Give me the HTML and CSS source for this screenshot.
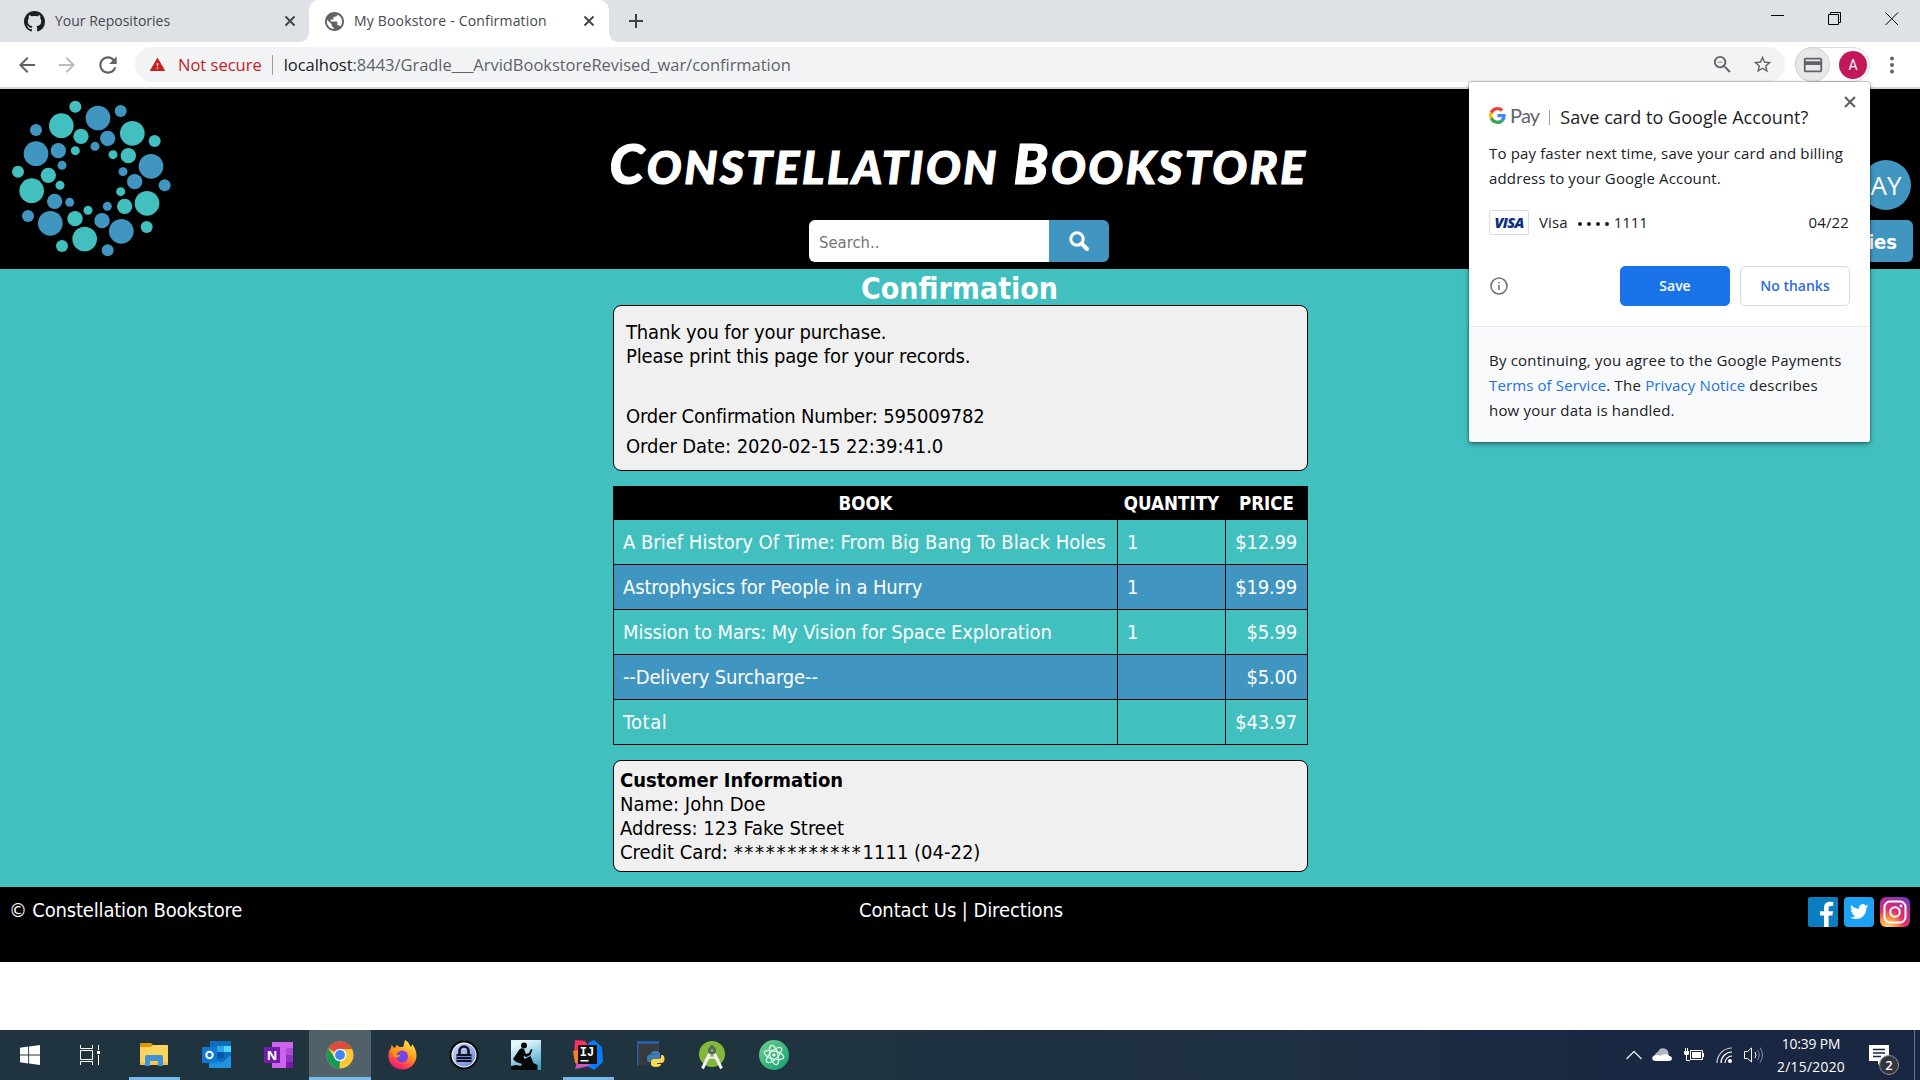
FILE: index.html
```html
<!DOCTYPE html>
<html lang="en">
<head>
<meta charset="utf-8">
<title>My Bookstore - Confirmation</title>
<link rel="stylesheet" href="styles.css">
</head>
<body>
<div class="tabstrip">
  <div class="tab tab-idle">
    <svg class="favicon" width="21" height="21" viewBox="0 0 16 16"><path fill="#1b1f23" fill-rule="evenodd" d="M8 0C3.58 0 0 3.58 0 8c0 3.54 2.29 6.53 5.47 7.59.4.07.55-.17.55-.38 0-.19-.01-.82-.01-1.49-2.01.37-2.53-.49-2.69-.94-.09-.23-.48-.94-.82-1.13-.28-.15-.68-.52-.01-.53.63-.01 1.08.58 1.23.82.72 1.21 1.87.87 2.33.66.07-.52.28-.87.51-1.07-1.78-.2-3.64-.89-3.64-3.95 0-.87.31-1.59.82-2.15-.08-.2-.36-1.02.08-2.12 0 0 .67-.21 2.2.82.64-.18 1.32-.27 2-.27s1.36.09 2 .27c1.53-1.04 2.2-.82 2.2-.82.44 1.1.16 1.92.08 2.12.51.56.82 1.27.82 2.15 0 3.07-1.87 3.75-3.65 3.95.29.25.54.73.54 1.48 0 1.07-.01 1.93-.01 2.2 0 .21.15.46.55.38A8.01 8.01 0 0016 8c0-4.42-3.58-8-8-8z"/></svg>
    <span class="tab-title">Your Repositories</span>
    <svg class="tab-close" width="12" height="12" viewBox="0 0 12 12"><path d="M1.5 1.5l9 9M10.500 1.500l-9 9"/></svg>
  </div>
  <div class="tab tab-active">
    <svg class="favicon" width="19" height="19" viewBox="2 2 20 20"><path fill="#5f6368" d="M12 2C6.480 2 2 6.480 2 12s4.480 10 10 10 10-4.480 10-10S17.520 2 12 2zm-1 17.930c-3.950-.490-7-3.850-7-7.930 0-.620.080-1.210.210-1.790L9 15v1c0 1.100.900 2 2 2v1.930zm6.900-2.540c-.260-.810-1-1.390-1.900-1.390h-1v-3c0-.550-.450-1-1-1H8v-2h2c.550 0 1-.450 1-1V7h2c1.100 0 2-.900 2-2v-.410c2.930 1.190 5 4.060 5 7.410 0 2.080-.800 3.970-2.100 5.390z"/></svg>
    <span class="tab-title wide">My Bookstore - Confirmation</span>
    <svg class="tab-close" width="12" height="12" viewBox="0 0 12 12"><path d="M1.500 1.500l9 9M10.500 1.500l-9 9"/></svg>
  </div>
  <svg class="new-tab" width="16" height="16" viewBox="0 0 16 16"><path d="M8 1v14M1 8h14"/></svg>
  <div class="window-buttons">
    <svg width="14" height="14" viewBox="0 0 14 14"><path d="M0 3.500h13"/></svg>
    <svg width="14" height="14" viewBox="0 0 14 14"><path d="M.5 2.500h10v10H.5zM2.500 2.500v-2h10v10h-2"/></svg>
    <svg width="14" height="14" viewBox="0 0 14 14"><path d="M.5.500l12.500 12.500M13 .500L.500 13"/></svg>
  </div>
</div>

<div class="toolbar">
  <div class="nav">
    <svg width="24" height="24" viewBox="0 0 24 24"><path fill="#5f6368" d="M20 11H7.830l5.590-5.590L12 4l-8 8 8 8 1.410-1.410L7.830 13H20v-2z"/></svg>
    <svg width="24" height="24" viewBox="0 0 24 24"><path fill="#babcbe" d="M4 13h12.170l-5.590 5.590L12 20l8-8-8-8-1.410 1.410L16.170 11H4v2z"/></svg>
    <svg width="26" height="26" viewBox="0 0 24 24"><path fill="#5f6368" d="M17.650 6.350C16.200 4.900 14.210 4 12 4c-4.420 0-7.990 3.580-7.990 8s3.570 8 7.990 8c3.730 0 6.840-2.550 7.730-6h-2.080c-.820 2.330-3.040 4-5.650 4-3.310 0-6-2.690-6-6s2.690-6 6-6c1.660 0 3.140.690 4.220 1.780L13 11h7V4l-2.350 2.350z"/></svg>
  </div>
  <div class="omnibox">
    <svg width="17" height="17" viewBox="0 1 24 22"><path fill="#c5221f" d="M1 21h22L12 2 1 21zm12-3h-2v-2h2v2zm0-4h-2v-4h2v4z"/></svg>
    <span class="insecure">Not secure</span>
    <span class="divider"></span>
    <span class="url"><b>localhost</b>:8443/Gradle___ArvidBookstoreRevised_war/confirmation</span>
    <svg class="zoom-icon" width="23" height="23" viewBox="0 0 24 24"><path fill="#5f6368" d="M15.500 14h-.790l-.280-.270A6.471 6.471 0 0016 9.500 6.500 6.500 0 109.500 16c1.610 0 3.090-.590 4.230-1.570l.270.280v.790l5 4.990L20.490 19l-4.990-5zm-6 0C7.010 14 5 11.990 5 9.500S7.010 5 9.500 5 14 7.010 14 9.500 11.990 14 9.500 14zM7 9h5v1H7z"/></svg>
    <svg width="21" height="21" viewBox="0 0 24 24"><path fill="#5f6368" d="M22 9.240l-7.190-.620L12 2 9.190 8.630 2 9.240l5.460 4.730L5.820 21 12 17.270 18.180 21l-1.630-7.030L22 9.240zM12 15.400l-3.760 2.270 1-4.280-3.320-2.880 4.380-.380L12 6.100l1.710 4.040 4.380.380-3.320 2.880 1 4.280L12 15.400z"/></svg>
  </div>
  <div class="profile">
    <span class="card-button"><svg width="22" height="22" viewBox="0 0 24 24"><path fill="#5f6368" d="M20 4H4c-1.110 0-1.990.890-1.990 2L2 18c0 1.110.890 2 2 2h16c1.110 0 2-.890 2-2V6c0-1.110-.890-2-2-2zm0 14H4v-6h16v6zm0-10H4V6h16v2z"/></svg></span>
    <span class="avatar">A</span>
  </div>
  <svg class="menu-dots" width="6" height="18" viewBox="0 0 6 18"><g fill="#5f6368"><circle cx="3" cy="2.500" r="2"/><circle cx="3" cy="9" r="2"/><circle cx="3" cy="15.500" r="2"/></g></svg>
</div>

<header class="site-header">
  <svg class="logo" width="200" height="181" viewBox="0 3 600 543">
    <g fill="#4096c0">
      <circle cx="294" cy="90" r="37"/><circle cx="453" cy="235" r="37"/><circle cx="364" cy="430" r="37"/><circle cx="151" cy="406" r="37"/><circle cx="108" cy="197" r="37"/>
      <circle cx="323" cy="151" r="23"/><circle cx="404" cy="281" r="23"/><circle cx="306" cy="398" r="23"/><circle cx="164" cy="340" r="23"/><circle cx="175" cy="188" r="23"/>
      <circle cx="362" cy="69" r="18"/><circle cx="494" cy="292" r="18"/><circle cx="323" cy="487" r="18"/><circle cx="84" cy="384" r="18"/><circle cx="108" cy="126" r="18"/>
      <circle cx="285" cy="175" r="13.500"/><circle cx="369" cy="251" r="13.500"/><circle cx="322" cy="355" r="13.500"/><circle cx="209" cy="343" r="13.500"/><circle cx="186" cy="232" r="13.500"/>
    </g>
    <g fill="#42bfbf">
      <circle cx="184" cy="113" r="37"/><circle cx="397" cy="136" r="37"/><circle cx="441" cy="346" r="37"/><circle cx="254" cy="453" r="37"/><circle cx="95" cy="308" r="37"/>
      <circle cx="243" cy="145" r="23"/><circle cx="385" cy="203" r="23"/><circle cx="374" cy="355" r="23"/><circle cx="225" cy="392" r="23"/><circle cx="145" cy="262" r="23"/>
      <circle cx="226" cy="56" r="18"/><circle cx="464" cy="159" r="18"/><circle cx="440" cy="417" r="18"/><circle cx="186" cy="474" r="18"/><circle cx="54" cy="251" r="18"/>
      <circle cx="226" cy="188" r="13.500"/><circle cx="339" cy="200" r="13.500"/><circle cx="362" cy="311" r="13.500"/><circle cx="264" cy="367" r="13.500"/><circle cx="180" cy="292" r="13.500"/>
    </g>
  </svg>
  <div class="brand">
    <h1 class="site-title">C<span>onstellation</span> B<span>ookstore</span></h1>
    <form class="search">
      <span class="search-field">Search..</span>
      <span class="search-button"><svg width="20" height="20" viewBox="0 0 20 20"><circle cx="8" cy="8" r="6.200" fill="none" stroke="#fff" stroke-width="3"/><path d="M12.500 12.500l5.500 5.500" stroke="#fff" stroke-width="4" stroke-linecap="round"/></svg></span>
    </form>
  </div>
  <div class="account">
    <span class="initials">AY</span>
    <span class="categories">Categories</span>
  </div>
</header>

<main class="content">
  <h2 class="page-title">Confirmation</h2>
  <section class="panel receipt">
    <p>Thank you for your purchase.<br>Please print this page for your records.</p>
    <p class="order">Order Confirmation Number: 595009782</p>
    <p class="order date">Order Date: 2020-02-15 22:39:41.0</p>
  </section>
  <table class="items">
    <colgroup><col class="col-book"><col class="col-qty"><col class="col-price"></colgroup>
    <thead><tr><th>BOOK</th><th>QUANTITY</th><th>PRICE</th></tr></thead>
    <tbody>
      <tr><td>A Brief History Of Time: From Big Bang To Black Holes</td><td>1</td><td>$12.99</td></tr>
      <tr><td class="snug">Astrophysics for People in a Hurry</td><td>1</td><td>$19.99</td></tr>
      <tr><td class="snug">Mission to Mars: My Vision for Space Exploration</td><td>1</td><td>$5.99</td></tr>
      <tr><td class="snug">--Delivery Surcharge--</td><td></td><td>$5.00</td></tr>
      <tr><td class="loose">Total</td><td></td><td>$43.97</td></tr>
    </tbody>
  </table>
  <section class="panel customer">
    <h3>Customer Information</h3>
    <p>Name: John Doe</p>
    <p>Address: 123 Fake Street</p>
    <p>Credit Card: <span class="mask">************</span>1111 (04-22)</p>
  </section>
</main>

<footer class="site-footer">
  <span class="copyright">© Constellation Bookstore</span>
  <span class="links">Contact Us | Directions</span>
  <span class="social">
    <svg width="30" height="30" viewBox="0 0 30 30"><rect width="30" height="30" rx="2" fill="#0d7dc2"/><path fill="#fff" d="M16 30V18.500h-4v-4.300h4V11c0-4 2.300-6.200 6-6.200l3.200.2v4h-2.300c-1.800 0-2.300.9-2.300 2.300v2.900h4.400l-.6 4.300h-3.800V30z"/></svg>
    <svg width="30" height="30" viewBox="0 0 30 30"><rect width="30" height="30" rx="4" fill="#1da1f2"/><path fill="#fff" transform="translate(6 5.500) scale(.76)" d="M23.953 4.570a10 10 0 01-2.825.775 4.958 4.958 0 002.163-2.723c-.951.555-2.005.959-3.127 1.184a4.920 4.920 0 00-8.384 4.482C7.690 8.095 4.067 6.130 1.640 3.162a4.822 4.822 0 00-.666 2.475c0 1.710.870 3.213 2.188 4.096a4.904 4.904 0 01-2.228-.616v.060a4.923 4.923 0 003.946 4.827 4.996 4.996 0 01-2.212.085 4.936 4.936 0 004.604 3.417 9.867 9.867 0 01-6.102 2.105c-.390 0-.779-.023-1.170-.067a13.995 13.995 0 007.557 2.209c9.053 0 13.998-7.496 13.998-13.985 0-.210 0-.420-.015-.630A9.935 9.935 0 0024 4.590z"/></svg>
    <svg width="30" height="30" viewBox="0 0 30 30"><defs><radialGradient id="insta" cx=".25" cy="1" r="1.150"><stop offset="0" stop-color="#fed373"/><stop offset=".25" stop-color="#f99a45"/><stop offset=".5" stop-color="#e1306c"/><stop offset=".75" stop-color="#b42e94"/><stop offset="1" stop-color="#7638c0"/></radialGradient></defs><rect width="30" height="30" rx="6" fill="url(#insta)"/><g fill="none" stroke="#fff" stroke-width="2"><rect x="4.500" y="4.500" width="21" height="21" rx="5.500"/><circle cx="15" cy="15" r="4.800"/></g><circle cx="21" cy="9" r="1.400" fill="#fff"/></svg>
  </span>
</footer>

<div class="taskbar">
  <div class="apps">
    <span class="app start"><svg width="20" height="20" viewBox="0 0 20 20"><path fill="#fff" d="M0 2.800L8.200 1.600v7.900H0zM9.100 1.500L20 0v9.500H9.100zM0 10.500h8.200v7.900L0 17.200zM9.100 10.500H20V20L9.100 18.500z"/></svg></span>
    <span class="app view"><svg width="20" height="20" viewBox="0 0 20 20"><g fill="none" stroke="#fff" stroke-width="1"><path d="M.5 0v3.500h12V0M.5 20v-3.500h12V20M.5 5.500h12v9H.5zM18.500 0v5M18.500 10v10"/></g><path fill="#fff" d="M17 6h3v3h-3z"/></svg></span>
    <span class="app running"><svg width="30" height="30" viewBox="0 0 30 30"><path fill="#dc9b05" d="M1 4q0-1 1-1h10l2 2v3H1z"/><path fill="#fbd45f" d="M1 7h11l2-2h14q1 0 1 1v18q0 1-1 1H1z"/><path fill="#f4c245" d="M1 22h28v2q0 1-1 1H1z"/><path fill="#3c93d6" d="M6 26V17q0-2 2-2h14q2 0 2 2v9h-5v-5h-8v5z"/></svg></span>
    <span class="app"><svg width="30" height="30" viewBox="0 0 30 30"><path fill="#0f6cbd" d="M9 1h21v27H9z"/><path fill="#28a8ea" d="M16 6h7v6h-7z"/><path fill="#50d9ff" d="M23 6h7v6h-7z"/><path fill="#0358a7" d="M16 12h7v6h-7z"/><path fill="#1f93df" d="M8 28V16l22 12zM30 15v13H14z"/><path fill="#0f78d4" d="M1 7h15v16H1z"/><circle cx="8.500" cy="15" r="3.200" fill="none" stroke="#fff" stroke-width="2"/></svg></span>
    <span class="app"><svg width="30" height="30" viewBox="0 0 30 30"><path fill="#ca64ea" d="M9 2h21v26H9z"/><path fill="#ae4bd5" d="M23 8h7v7h-7z"/><path fill="#9332bf" d="M23 15h7v7h-7z"/><path fill="#7719aa" d="M23 22h7v6h-7zM1 7h16v16H1z"/><text x="9" y="19.500" class="glyph" font-size="13">N</text></svg></span>
    <span class="app running focused"><svg width="28" height="28" viewBox="0 0 28 28"><circle cx="14" cy="14" r="13.500" fill="#fbc934"/><path fill="#dd4b3e" d="M14 14L2.300 7.200A13.500 13.500 0 0125.700 7.200L26 8H14z"/><path fill="#159a57" d="M2.300 7.200L8.800 17 14 20l-.500 7.500A13.500 13.500 0 012.300 7.200z"/><circle cx="14" cy="14" r="6.300" fill="#fff"/><circle cx="14" cy="14" r="5" fill="#4285f4"/></svg></span>
    <span class="app"><svg width="30" height="30" viewBox="0 0 30 30"><defs><linearGradient id="fox" x1=".8" y1="0" x2=".3" y2="1"><stop offset="0" stop-color="#fff04f"/><stop offset=".45" stop-color="#ff9a1f"/><stop offset=".8" stop-color="#ff3b4e"/><stop offset="1" stop-color="#e31587"/></linearGradient></defs><path fill="url(#fox)" d="M18 0c5 3 4 5 6 7 1-1 1-2 1-3 3 4 4.500 7 4.500 12 0 7-6 13.500-14 13.500S1.500 24 1.500 16c0-4 1-6 2.500-8l.500-3 3 3 2-2-.5-1.500 3.500 2.500c3 0 4 0 4-1z"/><circle cx="15" cy="16.500" r="6" fill="#7542e5"/><path fill="#ff980e" d="M5 9l8 1.500c-1 2-3 2-4.500 3 1 2 3 2 5 1-1 3-4 4-6.500 2z"/></svg></span>
    <span class="app"><svg width="30" height="30" viewBox="0 0 30 30"><defs><linearGradient id="lock" y2="1"><stop stop-color="#d3ddfa"/><stop offset="1" stop-color="#6482dc"/></linearGradient></defs><circle cx="15" cy="15" r="13.500" fill="#fff" stroke="#07090f" stroke-width="2"/><circle cx="15" cy="15" r="11.500" fill="url(#lock)"/><path d="M10.500 15v-4a4.500 4.500 0 019 0v4" fill="none" stroke="#11141f" stroke-width="2.600"/><path fill="#11141f" d="M7.500 14h15v8h-15z"/><path stroke="#6f88d0" d="M7.500 16.500h15M7.500 19.500h15"/></svg></span>
    <span class="app"><svg width="30" height="30" viewBox="0 0 30 30"><defs><linearGradient id="sky" x1=".6" y2="1"><stop stop-color="#e3f8fc"/><stop offset="1" stop-color="#2d9ac0"/></linearGradient></defs><path fill="url(#sky)" d="M0 0h30v30H0z"/><g fill="#050708"><circle cx="13" cy="5.500" r="3"/><path d="M8 10q2-3 5-1l2 5 3-1 2-4 1.500.5-2 5.500-4 2-3-1 1 3 6-3 3 7 4 2v5H0v-4l5-1 5 1 1-2-6-2-3-3z"/></g></svg></span>
    <span class="app running"><svg width="30" height="30" viewBox="0 0 30 30"><path fill="#ff2d63" d="M2 0l10 1 4 6-8 15-7-6z"/><path fill="#fc801d" d="M0 11l9-2v17l-7-3z"/><path fill="#087cfa" d="M15 3l6-3 8 7 1 15-9 8-9-5z"/><path fill="#c757bc" d="M2 29l2-7 15 3-7 2z"/><path fill="#111" d="M5 5h19v19H5z"/><path fill="#fff" d="M7.500 20h8v1.500h-8z"/><text x="14" y="16" class="glyph mono" font-size="12">IJ</text></svg></span>
    <span class="app"><svg width="30" height="30" viewBox="0 0 30 30"><path fill="#383b3d" d="M2 2l22 1v21L2 26z"/><path fill="#275da9" d="M2 1h22v3H2zM2 4h1.500v21.500H2z"/><path fill="#3a7db8" d="M20 11c4 0 5 1 5 3v5h-7c-2 0-2.500 1-2.500 3H14c-2 0-2-2-2-4s1-3.500 3-3.500h5V14h-4c0-2 1-3 4-3z"/><path fill="#ffd94c" d="M26 15h1c1.800 0 2.500 2 2.500 4s-1 4-3 4H22v1h4c0 2-2 3-5 3s-5-1-5-3v-3c0-1 1-2 2.500-2H24c1.500 0 2-1 2-2z"/></svg></span>
    <span class="app"><svg width="30" height="30" viewBox="0 0 30 30"><circle cx="15" cy="14" r="13" fill="#83b83b"/><path d="M14 11L5.500 28.500M16 11l8.500 17.500" stroke="#f2f2f2" stroke-width="3"/><path d="M8 20q7-5 14 0" fill="none" stroke="#f2f2f2" stroke-width="2"/><circle cx="15" cy="10.500" r="4" fill="#58655a"/><circle cx="15" cy="10.500" r="1.500" fill="#83b83b"/><path fill="#58655a" d="M13.800 5h2.400v3h-2.400z"/></svg></span>
    <span class="app"><svg width="30" height="30" viewBox="0 0 30 30"><defs><linearGradient id="atom" y2="1"><stop stop-color="#6fcf8f"/><stop offset="1" stop-color="#0fa070"/></linearGradient></defs><circle cx="15" cy="15" r="15" fill="url(#atom)"/><g fill="none" stroke="#e5f7ec" stroke-width="1.200"><ellipse cx="15" cy="15" rx="10" ry="4" transform="rotate(15 15 15)"/><ellipse cx="15" cy="15" rx="10" ry="4" transform="rotate(75 15 15)"/><ellipse cx="15" cy="15" rx="10" ry="4" transform="rotate(135 15 15)"/></g><circle cx="15" cy="15" r="1.600" fill="#fff"/></svg></span>
  </div>
  <div class="tray">
    <svg width="16" height="10" viewBox="0 0 16 10"><path d="M.5 9L8 1.500 15.500 9" fill="none" stroke="#e6e9ee" stroke-width="1.300"/></svg>
    <svg width="20" height="14" viewBox="0 0 20 14"><path fill="#b0b7c2" d="M3 8a4 4 0 013-4 5.500 5.500 0 0110-1l1 5z"/><path fill="#fff" d="M3.500 13C-.5 13-1 8 3 7.200c2-.6 4-.2 5 .6l4-1.500c2.500-.5 4 .2 4.500 1.500C21 8 21 13 17 13z"/></svg>
    <svg width="20" height="14" viewBox="0 0 20 14"><path fill="none" stroke="#fff" d="M6.500 2.500h12v9h-12zM19.500 5v4M2.500 6v6.500H6M1.500 0v3M3.500 0v3"/><path fill="#fff" d="M8 4h9v6H8zM0 3h5v3L4 7H1L0 6z"/></svg>
    <svg width="16" height="17" viewBox="0 0 16 17"><g fill="none" stroke-width="1.200"><path stroke="#c8cfda" d="M1 16A15 15 0 0116 1"/><path stroke="#fff" d="M5 16A11 11 0 0116 5M9 16a7 7 0 017-7"/></g><circle cx="14" cy="14" r="2" fill="#fff"/></svg>
    <svg width="20" height="18" viewBox="0 0 20 18"><g fill="none"><path stroke="#fff" d="M.5 5.500h3L7.500 2v14l-4-3.500h-3z"/><path stroke="#fff" d="M11 6q2 3 0 6"/><path stroke="#818b9e" d="M13.500 4q3.500 5 0 10M16 1.500q5 7.500 0 15"/></g></svg>
    <span class="clock"><span>10:39 PM</span><span class="day">2/15/2020</span></span>
    <span class="notice"><svg width="20" height="20" viewBox="0 0 20 20"><path fill="#fff" d="M0 0h20v16h-7l-4 4v-4H0z"/><path stroke="#1a2640" stroke-width="1.300" d="M4 4.500h12M4 8h12M4 11.500h8"/></svg><span class="badge">2</span></span>
    <span class="peek"></span>
  </div>
</div>

<aside class="popup">
  <svg class="popup-close" width="12" height="12" viewBox="0 0 12 12"><path d="M1 1l10 10M11 1L1 11"/></svg>
  <div class="popup-main">
    <div class="popup-title">
      <svg width="17" height="17" viewBox="0 0 48 48"><path fill="#ea4335" d="M24 9.500c3.540 0 6.710 1.220 9.210 3.600l6.850-6.850C35.900 2.380 30.470 0 24 0 14.620 0 6.510 5.380 2.560 13.220l7.980 6.190C12.430 13.720 17.740 9.500 24 9.500z"/><path fill="#4285f4" d="M46.980 24.550c0-1.570-.150-3.090-.380-4.550H24v9.020h12.940c-.580 2.960-2.260 5.480-4.780 7.180l7.730 6c4.510-4.180 7.090-10.360 7.090-17.650z"/><path fill="#fbbc05" d="M10.530 28.590c-.480-1.450-.760-2.990-.760-4.590s.270-3.140.760-4.590l-7.980-6.190C.920 16.460 0 20.120 0 24c0 3.880.920 7.540 2.560 10.780l7.970-6.190z"/><path fill="#34a853" d="M24 48c6.480 0 11.930-2.130 15.890-5.810l-7.730-6c-2.150 1.450-4.920 2.300-8.160 2.300-6.260 0-11.570-4.220-13.470-9.910l-7.980 6.190C6.510 42.620 14.620 48 24 48z"/></svg>
      <span class="pay">Pay</span>
      <span class="bar"></span>
      <span class="ask">Save card to Google Account?</span>
    </div>
    <p class="pitch">To pay faster next time, save your card and billing<br>address to your Google Account.</p>
    <div class="card-row">
      <span class="visa">VISA</span>
      <span>Visa</span>
      <span class="dots"><i></i><i></i><i></i><i></i></span>
      <span class="last-four">1111</span>
      <span class="expiry">04/22</span>
    </div>
    <div class="actions">
      <svg width="18" height="18" viewBox="0 0 18 18"><circle cx="9" cy="9" r="8" fill="none" stroke="#70757a" stroke-width="1.600"/><path fill="#70757a" d="M8.200 8h1.600v5H8.200zM8.200 5h1.600v1.600H8.200z"/></svg>
      <span class="btn primary">Save</span>
      <span class="btn">No thanks</span>
    </div>
  </div>
  <p class="legal">By continuing, you agree to the Google Payments<br><a>Terms of Service</a>. The <a>Privacy Notice</a> describes<br>how your data is handled.</p>
</aside>
</body>
</html>
```
FILE: styles.css
```css
* { box-sizing: border-box; }

body {
  margin: 0;
  width: 1920px;
  height: 1080px;
  overflow: hidden;
  display: flex;
  flex-direction: column;
  background: #fff;
  font: 20px/24px "DejaVu Sans Condensed", "DejaVu Sans", sans-serif;
}

h1, h2, h3, p { margin: 0; }
svg { display: block; flex: none; }

/* Tab strip */
.tabstrip {
  height: 42px;
  flex: none;
  display: flex;
  align-items: center;
  background: #dee1e6;
  font: 14px/20px "Open Sans", sans-serif;
  color: #3c4043;
}
.tab { height: 42px; display: flex; align-items: center; }
.tab-idle { width: 309px; padding: 0 13px 0 24px; }
.tab-active {
  position: relative;
  width: 300px;
  padding: 0 14px 0 16px;
  background: #fff;
  border-radius: 10px 10px 0 0;
}
.tab-active::before, .tab-active::after {
  content: "";
  position: absolute;
  bottom: 0;
  width: 9px;
  height: 9px;
}
.tab-active::before { left: -9px; background: radial-gradient(circle at 0 0, transparent 8.5px, #fff 9px); }
.tab-active::after { right: -9px; background: radial-gradient(circle at 100% 0, transparent 8.5px, #fff 9px); }
.tab-title { flex: 1; margin-left: 10px; color: #45494d; }
.wide { letter-spacing: .18px; }
.tab-close { stroke: #3c4043; stroke-width: 1.8; }
.new-tab { margin-left: 19px; fill: none; stroke: #3c4043; stroke-width: 2; }
.window-buttons { display: flex; gap: 43px; margin: -5px 0 0 auto; padding-right: 21px; fill: none; stroke: #000; stroke-width: 1; }

/* Address bar */
.toolbar {
  height: 47px;
  flex: none;
  display: flex;
  align-items: center;
  border-bottom: 2px solid #d5d7dc;
  background: #fff;
}
.nav { width: 135px; display: flex; align-items: center; gap: 16px; padding-left: 15px; }
.omnibox {
  width: 1650px;
  height: 35px;
  display: flex;
  align-items: center;
  padding: 0 12px 0 14px;
  border-radius: 18px;
  background: #f1f3f4;
  font: 16.5px/24px "Open Sans", sans-serif;
  color: #5f6368;
}
.insecure { margin-left: 12px; color: #c5221f; }
.divider { width: 1px; height: 20px; margin: 0 11px 0 10px; background: #9aa0a6; }
.url { flex: 1; letter-spacing: -.03px; }
.url b { font-weight: 400; color: #202124; }
.zoom-icon { margin-right: 18px; }
.profile {
  width: 75px;
  height: 35px;
  margin-left: 10px;
  display: flex;
  align-items: center;
  justify-content: space-between;
  padding-right: 2px;
  border: 1px solid #dadce0;
  border-radius: 18px;
}
.card-button {
  width: 35px;
  height: 35px;
  margin-left: -1px;
  display: grid;
  place-items: center;
  border: 1px solid #d0d2d4;
  border-radius: 50%;
  background: #e8e8e8;
}
.avatar {
  width: 28px;
  height: 28px;
  border-radius: 50%;
  background: #c2185b;
  color: #fff;
  text-align: center;
  font: 14px/28px Roboto, sans-serif;
}
.menu-dots { margin-left: 19px; }

/* Store header */
.site-header {
  height: 180px;
  flex: none;
  display: grid;
  grid-template-columns: 600px 1fr 600px;
  background: #000;
  color: #fff;
}
.brand { display: flex; flex-direction: column; align-items: center; }
.site-title {
  height: 60px;
  margin: 44px 3px 0 0;
  font: italic 900 56px/60px Lato, sans-serif;
  letter-spacing: 2.6px;
  white-space: nowrap;
  -webkit-text-stroke: 1.2px #fff;
}
.site-title span { font-size: 46px; text-transform: uppercase; }
.search { display: flex; width: 300px; height: 42px; margin-top: 27px; margin-right: 2px; }
.search-field {
  width: 240px;
  padding-left: 10px;
  border-radius: 6px 0 0 6px;
  background: #fff;
  color: #757575;
  font-size: 16.5px;
  line-height: 45px;
}
.search-button {
  width: 60px;
  display: grid;
  place-items: center;
  border-radius: 0 6px 6px 0;
  background: #4096c0;
}
.account { display: flex; flex-direction: column; align-items: flex-end; padding: 71px 7px 0 0; }
.initials {
  width: 50px;
  height: 50px;
  margin-right: 2px;
  border-radius: 50%;
  background: #4096c0;
  text-align: center;
  font: 26px/51px "Open Sans", sans-serif;
}
.categories {
  height: 42px;
  margin-top: 10px;
  padding: 0 16px;
  border-radius: 6px;
  background: #4096c0;
  font-weight: 700;
  font-size: 20px;
  line-height: 44px;
}

/* Confirmation */
.content {
  height: 618px;
  flex: none;
  display: flex;
  flex-direction: column;
  align-items: center;
  padding-left: 1px;
  background: #42bfbf;
}
.page-title { height: 36px; margin-right: 2px; font-size: 30px; line-height: 40px; color: #fff; }
.panel {
  width: 695px;
  border: 1px solid #000;
  border-radius: 8px;
  background: #f0f0f0;
  color: #000;
}
.receipt { height: 166px; padding: 14px 12px 0; letter-spacing: -.15px; }
.order { margin-top: 36px; letter-spacing: -.2px; }
.order.date { margin-top: 6px; letter-spacing: -.08px; }
.items {
  width: 695px;
  margin: 15px 0;
  table-layout: fixed;
  border-collapse: collapse;
  color: #fff;
}
.col-book { width: 504px; }
.col-qty { width: 108px; }
.col-price { width: 82px; }
.items th, .items td { border: 1px solid #000; }
.items th { height: 33px; padding: 1px 0 0; background: #000; font-size: 18.600px; line-height: 24px; }
.items td { height: 45px; padding: 0 9px; white-space: nowrap; line-height: 24px; }
.items td:last-child { padding-right: 10px; text-align: right; letter-spacing: -.2px; }
.items tr:nth-child(even) td { background: #4096c0; }
.items .snug { letter-spacing: -.15px; }
.items .loose { letter-spacing: .5px; }
.customer { height: 112px; padding: 7px 6px; }
.customer h3 { font-size: 20px; line-height: 24px; }
.mask { letter-spacing: 1.75px; }

.site-footer {
  height: 75px;
  flex: none;
  display: grid;
  grid-template-columns: 1fr auto 1fr;
  align-items: start;
  padding: 10px 10px 0 9px;
  background: #000;
  color: #fff;
}
.copyright { letter-spacing: -.18px; line-height: 26px; }
.links { letter-spacing: -.1px; margin-right: -3px; line-height: 26px; }
.social { display: flex; justify-content: flex-end; gap: 6px; }

/* Taskbar */
.taskbar {
  height: 50px;
  flex: none;
  margin-top: auto;
  display: flex;
  justify-content: space-between;
  background: linear-gradient(90deg, #20343f 0%, #20343f 35%, #1e3043 65%, #1a2742 85%);
}
.apps, .tray { display: flex; align-items: center; }
.app { width: 62px; height: 50px; display: grid; place-items: center; }
.app.start { width: 60px; }
.app.view { width: 63px; padding-right: 3px; }
.app.running { background: linear-gradient(#76b9ed, #76b9ed) 50% 100% / 51px 3px no-repeat; }
.app.focused { background: linear-gradient(#76b9ed, #76b9ed) 50% 100% / 100% 3px no-repeat #50616a; }
.glyph { fill: #fff; font-family: "Open Sans", sans-serif; font-weight: 700; text-anchor: middle; }
.glyph.mono { font-family: "Liberation Mono", monospace; }
.tray { height: 50px; gap: 12px; }
.tray > svg:first-child { margin-right: -2px; }
.clock {
  width: 72px;
  margin: 0 10px 0 -1px;
  display: flex;
  flex-direction: column;
  align-items: center;
  color: #fff;
  font: 13.8px/23px "Open Sans", sans-serif;
  letter-spacing: -.1px;
}
.clock .day { letter-spacing: .3px; }
.notice { position: relative; }
.badge {
  position: absolute;
  left: 10px;
  top: 10px;
  width: 20px;
  height: 20px;
  border: 1px solid #8d9097;
  border-radius: 50%;
  background: #33363c;
  color: #fff;
  text-align: center;
  font: 600 13px/18px "Open Sans", sans-serif;
}
.peek { width: 6px; height: 50px; margin-left: 13px; border-left: 1px solid #6d7788; }

/* Save-card bubble */
.popup {
  position: absolute;
  left: 1469px;
  top: 82px;
  width: 401px;
  height: 360px;
  border-radius: 3px;
  background: #fff;
  box-shadow: 0 0 1px 1px rgba(0, 0, 0, .18), 0 2px 5px rgba(0, 0, 0, .4);
  color: #202124;
  font: 15px/25px "Open Sans", sans-serif;
  letter-spacing: .15px;
  overflow: hidden;
}
.popup-close { position: absolute; left: 375px; top: 14px; stroke: #5f6368; stroke-width: 2.2; }
.popup-main { height: 244px; padding: 19px 20px 0; }
.popup-title { height: 33px; display: flex; align-items: center; }
.popup-title svg { margin-top: -4px; }
.pay { margin: -5px 0 0 4px; color: #5f6368; font: 20px/24px Lato, sans-serif; letter-spacing: -.8px; }
.bar { width: 1px; height: 15px; margin: 0 10px; background: #9aa0a6; }
.ask { font-size: 18px; letter-spacing: .04px; white-space: nowrap; }
.pitch { margin-top: 7px; white-space: nowrap; }
.card-row { display: flex; align-items: center; height: 25px; margin-top: 19px; }
.visa {
  width: 40px;
  height: 25px;
  margin-right: 10px;
  border: 1px solid #dadce0;
  border-radius: 2px;
  color: #0e2f7e;
  text-align: center;
  font: italic 800 14.5px/24px "Open Sans", sans-serif;
  letter-spacing: -.7px;
}
.dots { display: flex; gap: 5px; margin: 2px 5px 0 10px; }
.dots i { width: 4px; height: 4px; border-radius: 50%; background: #202124; }
.last-four { letter-spacing: -.1px; }
.expiry { margin: 0 1px 0 auto; }
.actions { display: flex; align-items: center; margin-top: 31px; padding-left: 1px; }
.btn {
  width: 110px;
  height: 40px;
  margin-left: 10px;
  border: 1px solid #dadce0;
  border-radius: 5px;
  color: #2b6be6;
  text-align: center;
  font-weight: 600;
  font-size: 14px;
  line-height: 38px;
  letter-spacing: 0;
}
.btn.primary { margin-left: auto; border-color: #1a73e8; background: #1a73e8; color: #fff; }
.legal { height: 116px; padding: 21px 20px 0; border-top: 1px solid #e8eaed; background: #f8f9fa; white-space: nowrap; letter-spacing: .2px; }
.legal a { color: #1a73e8; letter-spacing: .12px; }
```
